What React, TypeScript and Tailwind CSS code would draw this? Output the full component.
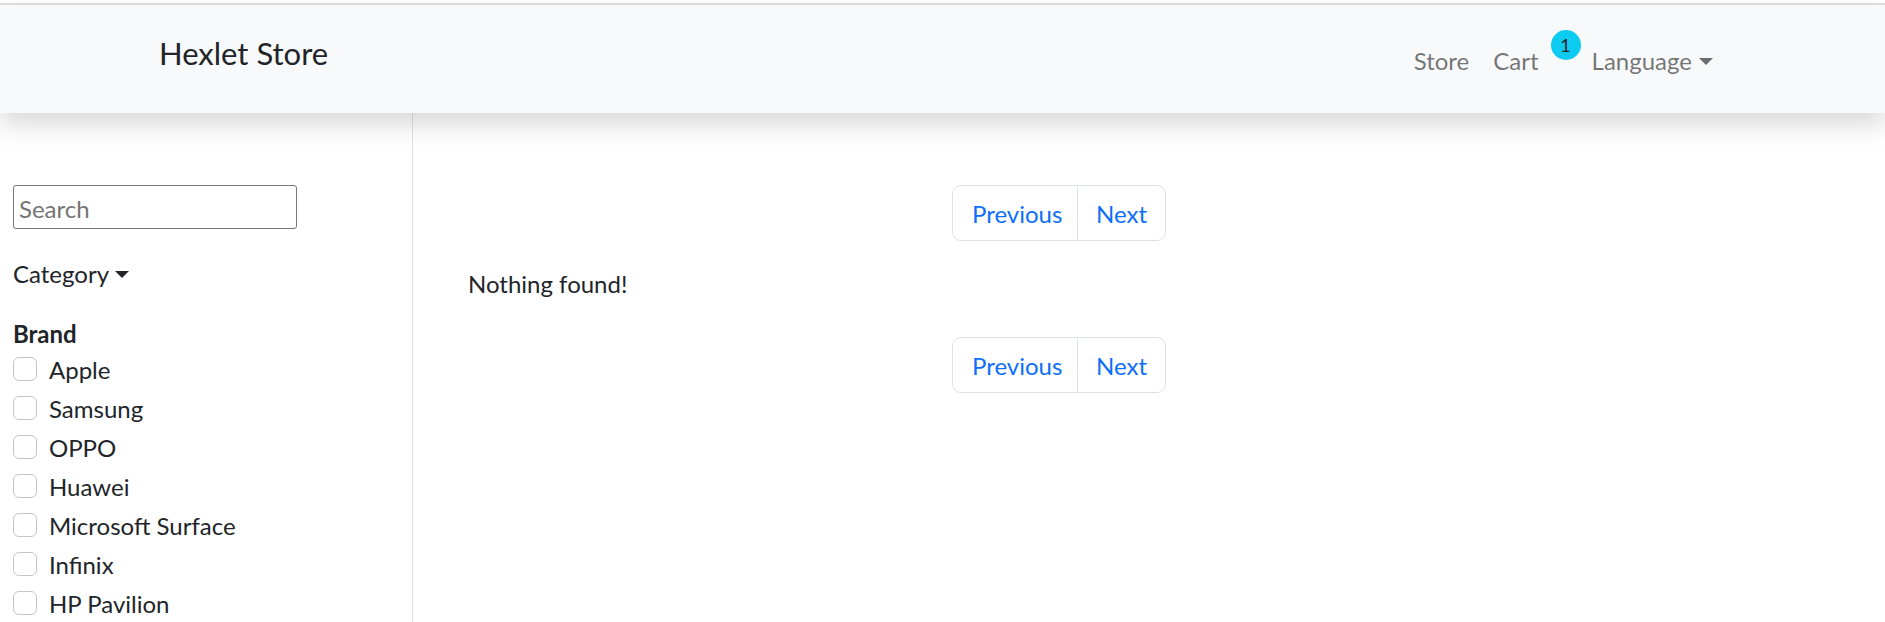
import React from "react";

const brands = [
  "Apple",
  "Samsung",
  "OPPO",
  "Huawei",
  "Microsoft Surface",
  "Infinix",
  "HP Pavilion",
];

function Pagination() {
  return (
    <div className="flex justify-center">
      <ul className="flex text-[24px] leading-[36px] text-[#0d6efd]">
        <li className="border border-[#dee2e6] rounded-l-[9px] px-[19px] pt-[10px] pb-[8px] w-[126px] text-center">
          Previous
        </li>
        <li className="border border-l-0 border-[#dee2e6] rounded-r-[9px] px-[18px] pt-[10px] pb-[8px] w-[88px] text-center">
          Next
        </li>
      </ul>
    </div>
  );
}

export default function App() {
  return (
    <div className="min-h-screen bg-white text-[#212529] font-['Lato','Open_Sans',sans-serif]">
      <div className="h-[3px] bg-white" />
      <div className="h-[2px] bg-[#e0e0e0]" />
      <nav className="relative z-10 h-[108px] bg-[#f8f9fa] shadow-[0_12px_24px_rgba(0,0,0,0.15)] flex items-start justify-between pl-[159px] pr-[172px]">
        <div className="mt-[26px] text-[31px] leading-[45px] text-[#212529]">Hexlet Store</div>
        <ul className="mt-[38px] flex items-start text-[24px] leading-[36px] text-[rgba(0,0,0,0.55)]">
          <li className="px-[12px]">Store</li>
          <li className="pl-[12px] flex items-start">
            <span>Cart</span>
            <span className="ml-[12px] -mt-[13px] w-[30px] h-[30px] rounded-full bg-[#0dcaf0] text-[#212529] text-[18px] leading-[30px] text-center">
              1
            </span>
          </li>
          <li className="pl-[11px] flex items-center">
            <span>Language</span>
            <span className="ml-[7px] mt-[1px] w-0 h-0 border-l-[7px] border-r-[7px] border-t-[7px] border-l-transparent border-r-transparent border-t-[#6c6c6c]" />
          </li>
        </ul>
      </nav>
      <div className="flex">
        <aside className="w-[413px] shrink-0 border-r border-[#dee2e6] pt-[72px] pl-[13px] min-h-[600px]">
          <input
            type="text"
            placeholder="Search"
            className="block w-[284px] h-[44px] border border-[#767676] rounded-[3px] px-[5px] pt-[2px] text-[24px] text-[#212529] placeholder:text-[#757575] outline-none"
          />
          <div className="mt-[27px] flex items-center text-[24px] leading-[36px]">
            <span>Category</span>
            <span className="ml-[6px] w-0 h-0 border-l-[7px] border-r-[7px] border-t-[7px] border-l-transparent border-r-transparent border-t-[#212529]" />
          </div>
          <div className="mt-[23px] pt-[1px] text-[24px] leading-[35px] font-bold">Brand</div>
          <ul>
            {brands.map((b) => (
              <li key={b} className="flex items-start h-[36px] mb-[3px] text-[24px]">
                <span className="mt-[6px] w-[24px] h-[24px] shrink-0 rounded-[6px] border border-[#c6c6c6] bg-white" />
                <span className="ml-[12px] pt-[1px] leading-[35px]">{b}</span>
              </li>
            ))}
          </ul>
        </aside>
        <main className="pt-[72px] pl-[55px]">
          <div className="w-[1182px]">
            <Pagination />
            <p className="mt-[25px] text-[24px] leading-[36px]">Nothing found!</p>
            <div className="mt-[35px]">
              <Pagination />
            </div>
          </div>
        </main>
      </div>
    </div>
  );
}
